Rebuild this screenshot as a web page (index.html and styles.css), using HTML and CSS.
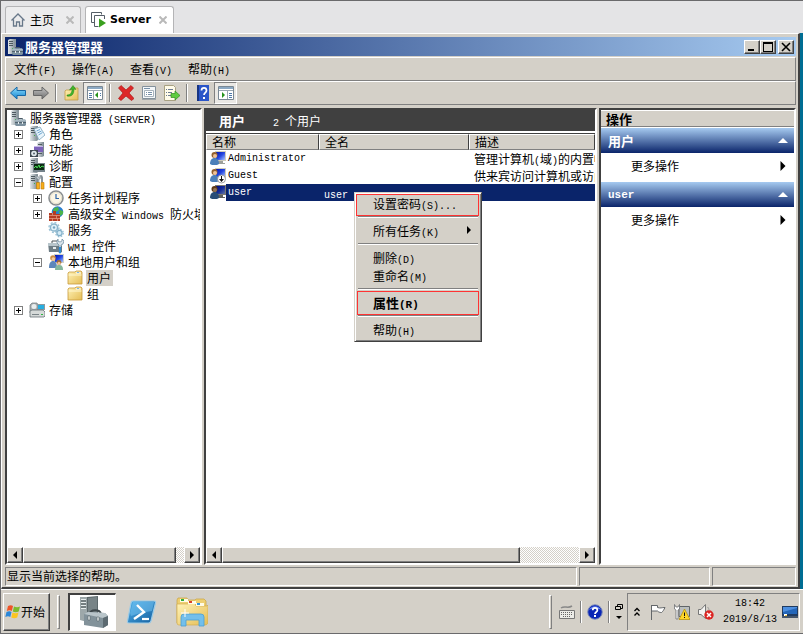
FILE: index.html
```html
<!DOCTYPE html>
<html lang="zh-CN">
<head>
    <meta charset="UTF-8">
    <meta name="viewport" content="width=device-width, initial-scale=1.0">
    <title>服务器管理器</title>
    <link rel="stylesheet" href="styles.css">
</head>
<body>
    <!-- icon sprite -->
    <svg class="sprite" aria-hidden="true">
        <defs>
            <linearGradient id="g-steel" x1="0" x2="1"><stop offset="0" stop-color="#e3e8ea"/><stop offset="1" stop-color="#75838b"/></linearGradient>
            <linearGradient id="g-folder" x1="0" y1="0" x2="1" y2="1"><stop offset="0" stop-color="#fff3b8"/><stop offset="1" stop-color="#e5bd55"/></linearGradient>
            <linearGradient id="g-blue" x1="0" y1="0" x2="0" y2="1"><stop offset="0" stop-color="#8fe0ff"/><stop offset="1" stop-color="#1282cf"/></linearGradient>
            <linearGradient id="g-gray" x1="0" y1="0" x2="0" y2="1"><stop offset="0" stop-color="#c4c4c4"/><stop offset="1" stop-color="#6e6e6e"/></linearGradient>
            <linearGradient id="g-screen" x1="0" y1="0" x2="1" y2="1"><stop offset="0" stop-color="#0014b4"/><stop offset=".5" stop-color="#2446e0"/><stop offset="1" stop-color="#a9c4ff"/></linearGradient>
            <linearGradient id="g-ps" x1="0" y1="0" x2="1" y2="1"><stop offset="0" stop-color="#4fb1ea"/><stop offset="1" stop-color="#155f9f"/></linearGradient>
        </defs>
        <symbol id="tower" viewBox="0 0 16 16">
            <path d="M1 1l2-1h6v14l-2 1H1z" fill="url(#g-steel)"/>
            <path d="M7 1l2-1v14l-2 1z" fill="#8a979e"/>
            <path d="M2 2.500h4M2 4.500h4M2 6.500h4" stroke="#4e5a60"/>
            <path d="M5 9h1v1H5z" fill="#39b54a"/>
        </symbol>
        <symbol id="server" viewBox="0 0 16 16">
            <use href="#tower"/>
            <path d="M8.500 10V8.500h4V10" fill="none" stroke="#4a5a66"/>
            <path d="M5 10.500l1-1h9l1 1V15l-1 1H6l-1-1z" fill="#7c919f"/>
            <path d="M5 10.500l1-1h9l1 1v1H5z" fill="#a9bac4"/>
            <path d="M5 12.500h11" stroke="#52646f"/>
            <path d="M8 12h1v2H8zM12 12h1v2h-1z" fill="#e8eef0"/>
        </symbol>
        <symbol id="roles" viewBox="0 0 16 16">
            <use href="#tower"/>
            <path d="M5 3l6-2 5 8-6 5z" fill="#e9f4fb" stroke="#7ba4bd" stroke-width=".8"/>
            <path d="M7.500 5l3.500-1.500M8.500 7l4-2M9.500 9l4-2.500" stroke="#6ca6cf"/>
        </symbol>
        <symbol id="features" viewBox="0 0 16 16">
            <path d="M8 1l2-1h5v14l-2 1H8z" fill="url(#g-steel)"/>
            <path d="M9 2.500h4M9 11.500h4" stroke="#4e5a60"/>
            <path d="M5 5l1-1h8v6H5z" fill="#7b62b8"/>
            <path d="M5 4.500h9" stroke="#c4b6e8"/>
            <path d="M1 8h8v7H1z" fill="#3c4750"/>
            <circle cx="5" cy="11.500" r="2.800" fill="#dfe9ed"/><circle cx="5" cy="11.500" r="1" fill="#56646d"/>
        </symbol>
        <symbol id="diag" viewBox="0 0 16 16">
            <use href="#tower"/>
            <path d="M4 5h12v9H4z" fill="#75838b"/>
            <path d="M5 6h10v6H5z" fill="#0c2a13"/>
            <path d="M5 10l2-2 1 2 2-3 1 3 2-2 2 1" fill="none" stroke="#47dc55"/>
        </symbol>
        <symbol id="config" viewBox="0 0 16 16">
            <use href="#tower"/>
            <path d="M12 1.500l1 2v5" fill="none" stroke="#899399" stroke-width="2"/>
            <path d="M8 1l-1 2 1 2h1v4h1V5h1l1-2-1-2v2H9z" fill="#c4cdd2" stroke="#69757c" stroke-width=".5"/>
            <path d="M7.500 8.500h3V15h-3zM12 8.500h3V15h-3z" fill="#f7ad19" stroke="#b97707" stroke-width=".6"/>
        </symbol>
        <symbol id="clock" viewBox="0 0 16 16">
            <circle cx="8" cy="8" r="7" fill="#f8fbfc" stroke="#8b8f91" stroke-width="1.600"/>
            <circle cx="8" cy="8" r="5.600" fill="#fbf6e6" stroke="#d8cfae" stroke-width=".6"/>
            <path d="M8 4v4.500h3" fill="none" stroke="#2f66a8" stroke-width="1.200"/>
        </symbol>
        <symbol id="firewall" viewBox="0 0 16 16">
            <circle cx="9.500" cy="6" r="5.800" fill="#2a7fd0"/>
            <path d="M6 2l4-1 1 3-3 2-3-1zM12 4l3 1v3l-3 2-1-3z" fill="#4cb44a"/>
            <path d="M1 7h4V5h3v3h4v7H1z" fill="#b33b23"/>
            <path d="M1 9.500h11M1 12.500h11M4.500 7v2M8.500 9.500v3M4.500 12.500V15M9.500 13v2" stroke="#e9a48c" stroke-width=".7"/>
        </symbol>
        <symbol id="gears" viewBox="0 0 16 16">
            <circle cx="6" cy="5.500" r="3.600" fill="#e1f1f9" stroke="#8bb5cc" stroke-width="1.500"/>
            <circle cx="6" cy="5.500" r="5" fill="none" stroke="#9dc3d7" stroke-width="1.400" stroke-dasharray="2 1.900"/>
            <circle cx="6" cy="5.500" r="1.200" fill="#76a5c1"/>
            <circle cx="11.500" cy="11" r="2.600" fill="#d4ebf6" stroke="#82afc8" stroke-width="1.200"/>
            <circle cx="11.500" cy="11" r="3.800" fill="none" stroke="#94bdd3" stroke-width="1.200" stroke-dasharray="1.600 1.400"/>
        </symbol>
        <symbol id="wmi" viewBox="0 0 16 16">
            <path d="M4 5V3h6v2" fill="none" stroke="#4b5357"/>
            <path d="M0 5h14v9H1z" fill="#6e7d85"/>
            <path d="M0 5h14v3H0z" fill="#b8c5cb"/>
            <path d="M5 9h3v2H5z" fill="#e6ecee"/>
            <path d="M10 1v2l2 1 2-1V1l2 2-1 3-2 1v8h-2V7L9 5V3z" fill="#d8e3ea" stroke="#54778f" stroke-width=".6"/>
            <path d="M11 9h2v6h-2z" fill="#2f8bd3"/>
        </symbol>
        <symbol id="groups" viewBox="0 0 16 16">
            <path d="M6 0h10v9H6z" fill="#cfd1ca"/><path d="M7 1h8v7H7z" fill="url(#g-screen)"/>
            <circle cx="5" cy="4" r="2.800" fill="#c98c43"/>
            <circle cx="5.300" cy="5" r="1.800" fill="#f3c9a0"/>
            <path d="M1 14c0-5 1.500-7 4-7s4 2 4 7z" fill="#5d87ba"/>
            <circle cx="11" cy="8.500" r="2.400" fill="#9b6a33"/>
            <circle cx="11" cy="9.300" r="1.600" fill="#f1c299"/>
            <path d="M7 16c0-4 1.500-5 4-5s4 1 4 5z" fill="#84b79d"/>
        </symbol>
        <symbol id="folder" viewBox="0 0 16 16">
            <path d="M1 3l1-1h6l1-1h5l1 1v12H1z" fill="url(#g-folder)" stroke="#c89b3a" stroke-width=".8"/>
            <path d="M9 3h5" stroke="#fff"/><path d="M1.500 5h13" stroke="#fff7cf"/>
            <path d="M10 2.500h2" stroke="#7cb7e3"/>
        </symbol>
        <symbol id="storage" viewBox="0 0 16 16">
            <path d="M1 3l2-2h5l1 2v8H1z" fill="#a5adb0" stroke="#70797d" stroke-width=".7"/>
            <circle cx="5" cy="4.500" r="2.500" fill="#e9eded"/>
            <path d="M8 2h8v6H8z" fill="#8e999e"/><path d="M9 3h6v4H9z" fill="#27aee0"/>
            <path d="M1 9l2-1h11l2 2v4l-1 1H1z" fill="#d6dad9" stroke="#667074" stroke-width=".8"/>
            <path d="M3 12.500h7" stroke="#7a8488"/><path d="M12 12h2v1h-2z" fill="#2fb540"/>
        </symbol>
        <symbol id="user" viewBox="0 0 16 16">
            <path d="M5 0h11v10H5z" fill="#cfccbd"/><path d="M6 1h9v8H6z" fill="url(#g-screen)"/>
            <path d="M8 10h5v2h2v1H8z" fill="#9da09a"/>
            <circle cx="4.500" cy="4" r="3" fill="#93612e"/>
            <circle cx="5" cy="5" r="2" fill="#efc299"/>
            <path d="M0 13c0-4 2-6 4.500-6S9 9 9 13l-2 1H2z" fill="#4b7fb9"/>
        </symbol>
        <symbol id="user-off" viewBox="0 0 16 16">
            <use href="#user"/>
            <circle cx="11.500" cy="11" r="4" fill="#fff" stroke="#888" stroke-width=".8"/>
            <path d="M11 8h1v3h2l-2.500 3L9 11h2z" fill="#111"/>
        </symbol>
        <symbol id="back" viewBox="0 0 16 16"><path d="M.5 8L7 2v3.500h8.500v5H7V14z" fill="url(#g-blue)" stroke="#1767a5"/></symbol>
        <symbol id="forward" viewBox="0 0 16 16"><path d="M15.500 8L9 2v3.500H.5v5H9V14z" fill="url(#g-gray)" stroke="#666"/></symbol>
        <symbol id="folder-up" viewBox="0 0 16 16">
            <path d="M1 6l1-1h5l1-2h6v12H1z" fill="url(#g-folder)" stroke="#c39d46" stroke-width=".8"/>
            <path d="M3 10c4 0 5-3 5-6L5.500 5 9 .5 12 4.500 10 4c0 5-2 8-7 7z" fill="#3fb52b" stroke="#278015" stroke-width=".5"/>
        </symbol>
        <symbol id="pane-left" viewBox="0 0 16 16">
            <path d="M.5 1.500h15v13H.5z" fill="#fff" stroke="#7a8894"/>
            <path d="M1 2h14v2H1z" fill="#8ca9c4"/><path d="M1 5.500h14M6.500 6v8" stroke="#9aa7b2"/>
            <path d="M2 8.500h3M2 10.500h3M2 12.500h3M13 8.500h1M13 10.500h1" stroke="#4d78a8"/>
            <path d="M11 7v6l-3-3z" fill="#25921b"/>
        </symbol>
        <symbol id="pane-right" viewBox="0 0 16 16">
            <path d="M.5 1.500h15v13H.5z" fill="#fff" stroke="#7a8894"/>
            <path d="M1 2h14v2H1z" fill="#8ca9c4"/><path d="M1 5.500h14M9.500 6v8" stroke="#9aa7b2"/>
            <path d="M11 8.500h3M11 10.500h3M11 12.500h3" stroke="#4d78a8"/>
            <path d="M4 7v6l3-3z" fill="#25921b"/>
        </symbol>
        <symbol id="delete" viewBox="0 0 16 16"><path d="M3 .5L8 5l5-4.500 2.500 2.500L11 8l5 5.500-2.500 2L8 11l-5 4.500-2.500-2L5 8 .5 3z" fill="#dd2929" stroke="#ad1717" stroke-width=".7"/></symbol>
        <symbol id="props" viewBox="0 0 16 16">
            <path d="M1.500 1.500h13v12h-13z" fill="#f4f7f9" stroke="#84919b"/>
            <path d="M3.500 5.500h9v6h-9z" fill="#fff" stroke="#a9b4bd"/>
            <path d="M3 3.500h6M5 7.500h1M7 7.500h4M5 9.500h1M7 9.500h4" stroke="#7790a8"/>
            <path d="M1 14.500h14" stroke="#a2a7aa"/>
        </symbol>
        <symbol id="export" viewBox="0 0 16 16">
            <path d="M.5.500h9l2 2v13H.5z" fill="#fffbe9" stroke="#a8a182"/>
            <path d="M2 4.500h1M4 4.500h5M2 7.500h1M4 7.500h4M2 10.500h1M4 10.500h3" stroke="#6d7c93"/>
            <path d="M7 8.500h4V6l5 4.500-5 4.500v-2.500H7z" fill="#5ecb3f" stroke="#2f8d1c" stroke-width=".7"/>
        </symbol>
        <symbol id="help" viewBox="0 0 16 16">
            <path d="M2 0h12v16H2z" fill="#2a55c8"/><path d="M2 0h2v16H2z" fill="#183583"/>
            <path d="M6.500 5.500c0-3.500 5-3.500 5 0 0 2.200-2.500 2-2.500 4.500" fill="none" stroke="#fff" stroke-width="1.700"/>
            <path d="M8 12h2v2H8z" fill="#fff"/>
        </symbol>
        <symbol id="help-round" viewBox="0 0 16 16">
            <circle cx="8" cy="8" r="7.300" fill="#0a25b5" stroke="#8794bb"/>
            <path d="M2 6c2-5 10-5 12 0-3-2-9-2-12 0z" fill="#6684ee"/>
            <path d="M5.700 6.300c0-3.300 4.700-3.300 4.700 0C10.400 8 8 8 8 10" fill="none" stroke="#fff" stroke-width="1.700"/>
            <path d="M7 11h2v2H7z" fill="#fff"/>
        </symbol>
        <symbol id="home" viewBox="0 0 16 16"><path d="M.5 8.500L7 2l6.500 6.500M2.500 7.500V14h3v-4h3v4h3V7.500" fill="none" stroke="#677789" stroke-width="1.300"/></symbol>
        <symbol id="vm" viewBox="0 0 16 16">
            <path d="M3.500 10.500h-3v-10h10v2" fill="none" stroke="#555e67"/>
            <path d="M7.500 14.500h-4v-11h10V7" fill="none" stroke="#555e67"/>
            <path d="M8 6.500l7 4.500-7 4.500z" fill="#3aa01f"/>
        </symbol>
        <symbol id="windows" viewBox="0 0 16 16">
            <path d="M3 2c2-1 3.500-1 5 0L6.800 7c-1.500-1-3-1-5 0z" fill="#ef5427"/>
            <path d="M9 2.500c2 1 4 1 6 0l-1.300 5c-2 1-4 1-5.900 0z" fill="#7dbb2c"/>
            <path d="M1.500 8c2-1 3.500-1 5 0l-1.200 5c-1.500-1-3-1-5 0z" fill="#2b87d9"/>
            <path d="M7.500 8.500c2 1 4 1 6 0l-1.300 5c-2 1-4 1-5.900 0z" fill="#fbc522"/>
        </symbol>
        <symbol id="server-big" viewBox="0 0 32 32">
            <path d="M3 1h7v25l-7-2z" fill="#9da8aa"/>
            <path d="M10 1l11-1v24l-11 2z" fill="#5c686b"/><path d="M11 2l9-1v16l-9 4z" fill="#788487"/>
            <path d="M4 3.500h5M4 6.500h5M4 9.500h5M4 12.500h5" stroke="#e8eeee"/>
            <path d="M4 5h5M4 8h5M4 11h5" stroke="#4c5658"/>
            <path d="M13 18c0-5 10-5 11 0" fill="none" stroke="#3e484c" stroke-width="1.800"/>
            <path d="M7 18l4-2 17 1 3 3v9l-5 3-19-3z" fill="#82929a"/>
            <path d="M7 18l4-2 17 1 3 3-5 2z" fill="#b9c5ca"/><path d="M26 22l5-2v9l-5 3z" fill="#5d6b72"/>
            <path d="M11 20h2v4h-2zM20 21h2v4h-2z" fill="#e4eaec" stroke="#4c595f" stroke-width=".5"/>
        </symbol>
        <symbol id="powershell" viewBox="0 0 32 32">
            <path d="M7 5h21q2 0 1.500 2L25 25q-.5 2-2.500 2H3q-2 0-1.500-2L5 7q.5-2 2-2z" fill="url(#g-ps)" stroke="#9bcbe8" stroke-width="1.200"/>
            <path d="M7 6h21l-2 9Q15 16 5 20L4 17z" fill="#78c6f3" opacity=".5"/>
            <path d="M11 9l7 7-10 7" fill="none" stroke="#fff" stroke-width="2.400"/><path d="M16 23h7" stroke="#fff" stroke-width="2.200"/>
        </symbol>
        <symbol id="explorer" viewBox="0 0 32 32">
            <path d="M1 4l1-2h9l1 2h7l1-1h8l2 2v22H1z" fill="#eecf72" stroke="#c9a340" stroke-width=".7"/>
            <path d="M1 8h11l1-1h6l1 3h11l1-1v18q-1 2-3 2H3q-2 0-2-2z" fill="url(#g-folder)" stroke="#d3ae4e" stroke-width=".7"/>
            <path d="M4 3h8v3H4zM12 5h8v3h-8zM20 7h8v3h-8z" fill="#fffbe6"/>
            <path d="M5 3h3v2H5z" fill="#2fae3c"/><path d="M13 5h3v2h-3z" fill="#d9402a"/><path d="M21 7h3v2h-3z" fill="#2f95d9"/>
            <path d="M5 30v-9q0-3 3-3h17q3 0 3 3v9h-5v-6H10v6z" fill="#73bfeb" stroke="#4a9fd3" stroke-width=".8"/>
            <path d="M9 13v8M5 17h8" stroke="#fff"/>
        </symbol>
        <symbol id="keyboard" viewBox="0 0 16 16">
            <path d="M2 4c4-3 6 1 11-2" fill="none" stroke="#888" stroke-width="1.500"/>
            <path d="M.5 6.500h15v8H.5z" fill="#ecece8" stroke="#777"/>
            <path d="M2 8.500h12M2 10.500h12M4 12.500h8" stroke="#666" stroke-dasharray="1 1"/>
        </symbol>
        <symbol id="flag" viewBox="0 0 16 16"><path d="M1.500 1v15M2 1.500h5.500v2c3 1 4 0 7.500 0-1 2-2 4-3.500 5-2 0-3-.5-4-1.500H2" fill="#fff" stroke="#63676a"/></symbol>
        <symbol id="network" viewBox="0 0 16 16">
            <path d="M5 2.500h10.500v10H5z" fill="#babebe" stroke="#606568"/>
            <path d="M.5.500V5l1.500 1v9h2V6l1.500-1V.5L4 3H2z" fill="#fff" stroke="#5e6265" stroke-width=".7"/>
            <path d="M10.500 5l5.500 10.500H5z" fill="#ffd72a" stroke="#b18c00" stroke-width=".7"/>
            <path d="M10 8.500h1V12h-1zM10 13h1v1h-1z" fill="#111"/>
        </symbol>
        <symbol id="volume" viewBox="0 0 16 16">
            <path d="M.5 5.500H3l4.500-5v14L3 10.500H.5z" fill="#f4f4f2" stroke="#777"/>
            <path d="M9.500 3c1 1 1.500 2 1.500 3" fill="none" stroke="#999"/>
            <circle cx="11" cy="11" r="4.700" fill="#db2522"/>
            <path d="M9 9l4 4M13 9l-4 4" stroke="#fff" stroke-width="1.500"/>
        </symbol>
        <symbol id="desktop" viewBox="0 0 16 16">
            <path d="M0 2h16v10H0z" fill="#203b60"/><path d="M1 3h14v7H1z" fill="#4d8fe0"/><path d="M1 8l14-4v6H1z" fill="#2466b8"/>
            <path d="M2 10h3v2H2z" fill="#fff"/><path d="M0 12h16v2H0z" fill="#46566a"/><path d="M3 11h2v1H3z" fill="#f5c43a"/>
        </symbol>
        <symbol id="tri-left" viewBox="0 0 8 8"><path d="M6 0v8L2 4z"/></symbol>
        <symbol id="tri-right" viewBox="0 0 8 8"><path d="M2 0v8l4-4z"/></symbol>
    </svg>

    <nav class="tabs">
        <div class="tab">
            <svg class="icon"><use href="#home"/></svg>
            <button class="tab-name">主页</button>
            <button class="tab-close" aria-label="关闭主页"><svg viewBox="0 0 8 8"><path d="M.5.500l7 7M7.500.500l-7 7"/></svg></button>
        </div>
        <div class="tab active">
            <svg class="icon"><use href="#vm"/></svg>
            <button class="tab-name">Server</button>
            <button class="tab-close" aria-label="关闭 Server"><svg viewBox="0 0 8 8"><path d="M.5.500l7 7M7.500.500l-7 7"/></svg></button>
        </div>
    </nav>

    <main class="desktop">
        <div class="window">
            <header class="titlebar">
                <svg class="icon"><use href="#server"/></svg>
                <h1>服务器管理器</h1>
                <button class="win-btn" aria-label="最小化"><svg viewBox="0 0 10 10"><path d="M1 7h6v2H1z"/></svg></button>
                <button class="win-btn" aria-label="最大化"><svg viewBox="0 0 10 10"><path d="M0 0h10v10H0zM1 2v7h8V2z" fill-rule="evenodd"/></svg></button>
                <button class="win-btn close" aria-label="关闭"><svg viewBox="0 0 10 10"><path d="M1 1l8 8M9 1L1 9" stroke="#000" stroke-width="1.600"/></svg></button>
            </header>
            <div class="bar menubar">
                <button>文件<span class="en">(F)</span></button>
                <button>操作<span class="en">(A)</span></button>
                <button>查看<span class="en">(V)</span></button>
                <button>帮助<span class="en">(H)</span></button>
            </div>
            <div class="bar toolbar">
                <button aria-label="后退"><svg class="icon"><use href="#back"/></svg></button>
                <button aria-label="前进"><svg class="icon"><use href="#forward"/></svg></button>
                <i class="sep"></i>
                <button aria-label="上一级"><svg class="icon"><use href="#folder-up"/></svg></button>
                <button class="pressed" aria-label="显示/隐藏控制台树"><svg class="icon"><use href="#pane-left"/></svg></button>
                <i class="sep"></i>
                <button aria-label="删除"><svg class="icon"><use href="#delete"/></svg></button>
                <button aria-label="属性"><svg class="icon"><use href="#props"/></svg></button>
                <button aria-label="导出列表"><svg class="icon"><use href="#export"/></svg></button>
                <i class="sep"></i>
                <button aria-label="帮助"><svg class="icon"><use href="#help"/></svg></button>
                <button class="pressed" aria-label="显示/隐藏操作窗格"><svg class="icon"><use href="#pane-right"/></svg></button>
            </div>

            <div class="panes">
                <section class="pane">
                    <ul class="tree">
                        <li>
                            <div class="node"><svg class="icon"><use href="#server"/></svg><span class="label">服务器管理器<span class="en"> (SERVER)</span></span></div>
                            <ul>
                                <li><div class="node"><button class="toggle plus" aria-label="展开"></button><svg class="icon"><use href="#roles"/></svg><span class="label">角色</span></div></li>
                                <li><div class="node"><button class="toggle plus" aria-label="展开"></button><svg class="icon"><use href="#features"/></svg><span class="label">功能</span></div></li>
                                <li><div class="node"><button class="toggle plus" aria-label="展开"></button><svg class="icon"><use href="#diag"/></svg><span class="label">诊断</span></div></li>
                                <li>
                                    <div class="node"><button class="toggle" aria-label="折叠"></button><svg class="icon"><use href="#config"/></svg><span class="label">配置</span></div>
                                    <ul class="sub">
                                        <li><div class="node"><button class="toggle plus" aria-label="展开"></button><svg class="icon"><use href="#clock"/></svg><span class="label">任务计划程序</span></div></li>
                                        <li><div class="node"><button class="toggle plus" aria-label="展开"></button><svg class="icon"><use href="#firewall"/></svg><span class="label">高级安全<span class="en"> Windows </span>防火墙</span></div></li>
                                        <li><div class="node leaf"><svg class="icon"><use href="#gears"/></svg><span class="label">服务</span></div></li>
                                        <li><div class="node leaf"><svg class="icon"><use href="#wmi"/></svg><span class="label"><span class="en">WMI </span>控件</span></div></li>
                                        <li>
                                            <div class="node"><button class="toggle" aria-label="折叠"></button><svg class="icon"><use href="#groups"/></svg><span class="label">本地用户和组</span></div>
                                            <ul class="sub">
                                                <li><div class="node leaf"><svg class="icon"><use href="#folder"/></svg><span class="label current">用户</span></div></li>
                                                <li><div class="node leaf"><svg class="icon"><use href="#folder"/></svg><span class="label">组</span></div></li>
                                            </ul>
                                        </li>
                                    </ul>
                                </li>
                                <li><div class="node"><button class="toggle plus" aria-label="展开"></button><svg class="icon"><use href="#storage"/></svg><span class="label">存储</span></div></li>
                            </ul>
                        </li>
                    </ul>
                    <div class="scrollbar">
                        <button aria-label="向左"><svg><use href="#tri-left"/></svg></button>
                        <i class="thumb"></i>
                        <i class="track"></i>
                        <button aria-label="向右"><svg><use href="#tri-right"/></svg></button>
                    </div>
                </section>

                <section class="pane users">
                    <div class="users-head"><h2>用户</h2><span><span class="en">2 </span>个用户</span></div>
                    <div class="list">
                        <table>
                            <colgroup><col class="col-name"><col class="col-full"><col></colgroup>
                            <thead>
                                <tr><th>名称</th><th>全名</th><th>描述</th></tr>
                            </thead>
                            <tbody>
                                <tr>
                                    <td><div class="name"><svg class="icon"><use href="#user"/></svg><span class="en">Administrator</span></div></td>
                                    <td></td>
                                    <td>管理计算机<span class="en">(</span>域<span class="en">)</span>的内置帐户</td>
                                </tr>
                                <tr>
                                    <td><div class="name"><svg class="icon"><use href="#user-off"/></svg><span class="en">Guest</span></div></td>
                                    <td></td>
                                    <td>供来宾访问计算机或访问域的内置帐户</td>
                                </tr>
                                <tr class="selected">
                                    <td><div class="name"><svg class="icon"><use href="#user"/></svg><span class="en">user</span></div></td>
                                    <td><span class="en">user</span></td>
                                    <td></td>
                                </tr>
                            </tbody>
                        </table>
                        <div class="context-menu">
                            <button class="marked wide">设置密码<span class="en">(S)...</span></button>
                            <hr>
                            <button class="more">所有任务<span class="en">(K)</span><svg><use href="#tri-right"/></svg></button>
                            <hr>
                            <button>删除<span class="en">(D)</span></button>
                            <button>重命名<span class="en">(M)</span></button>
                            <hr>
                            <button class="marked default">属性<span class="en">(R)</span></button>
                            <hr>
                            <button>帮助<span class="en">(H)</span></button>
                        </div>
                    </div>
                    <div class="scrollbar">
                        <button aria-label="向左"><svg><use href="#tri-left"/></svg></button>
                        <i class="thumb"></i>
                        <i class="track"></i>
                        <button aria-label="向右"><svg><use href="#tri-right"/></svg></button>
                    </div>
                </section>

                <aside class="pane">
                    <h2 class="actions-head">操作</h2>
                    <button class="group">用户<svg viewBox="0 0 10 5"><path d="M5 0l5 5H0z"/></svg></button>
                    <button class="action">更多操作<svg><use href="#tri-right"/></svg></button>
                    <button class="group"><span class="en">user</span><svg viewBox="0 0 10 5"><path d="M5 0l5 5H0z"/></svg></button>
                    <button class="action">更多操作<svg><use href="#tri-right"/></svg></button>
                </aside>
            </div>

            <footer class="statusbar"><span>显示当前选择的帮助。</span><span></span><span></span></footer>
        </div>
    </main>

    <div class="taskbar">
        <button class="start"><svg class="icon"><use href="#windows"/></svg>开始</button>
        <i class="grip"></i>
        <button class="task running" aria-label="服务器管理器"><svg><use href="#server-big"/></svg></button>
        <button class="task" aria-label="PowerShell"><svg><use href="#powershell"/></svg></button>
        <button class="task" aria-label="资源管理器"><svg><use href="#explorer"/></svg></button>
        <div class="lang">
            <i class="grip"></i>
            <button aria-label="键盘"><svg class="icon"><use href="#keyboard"/></svg></button>
            <i class="line"></i>
            <button aria-label="帮助"><svg class="icon"><use href="#help-round"/></svg></button>
            <i class="line"></i>
            <button class="lang-opts" aria-label="选项"><svg viewBox="0 0 8 18"><path d="M2.500 3.500v-2h5v4h-2M.5 3.500h5v3h-5z" fill="none" stroke="#000"/><path d="M1 13h6l-3 3z"/></svg></button>
        </div>
        <div class="tray">
            <button class="chevrons" aria-label="显示隐藏的图标"><svg viewBox="0 0 6 10"><path d="M.5 4L3 1.500 5.500 4M.5 8.500L3 6l2.500 2.500" fill="none" stroke="#000" stroke-width="1.300"/></svg></button>
            <svg class="icon"><use href="#flag"/></svg>
            <svg class="icon"><use href="#network"/></svg>
            <svg class="icon"><use href="#volume"/></svg>
            <div class="clock">
                <time class="en">18:42<br>2019/8/13</time>
                <svg class="icon"><use href="#desktop"/></svg>
            </div>
        </div>
    </div>
</body>
</html>
```
FILE: styles.css
```css
:root {
    --face: #d4d0c8;
    --shade: #808080;
    --dark: #404040;
    --navy: #0a246a;
    --sky: #a6caf0;
    --cjk: "Noto Sans CJK SC", sans-serif;
}

* {
    box-sizing: border-box;
}

body {
    margin: 0;
    min-height: 100vh;
    display: flex;
    flex-direction: column;
    border: 1px solid #6a6a6c;
    border-right: 0;
    background: var(--face);
    font: 12px/16px var(--cjk);
    color: #000;
}

h1, h2, ul {
    margin: 0;
    padding: 0;
    list-style: none;
}

button {
    margin: 0;
    padding: 0;
    border: 0;
    background: none;
    font: inherit;
    color: inherit;
    text-align: left;
}

svg {
    display: block;
    flex: none;
}

.sprite {
    position: absolute;
    width: 0;
    height: 0;
}

.icon {
    width: 16px;
    height: 16px;
}

/* half-width latin next to 12px hanzi */
.en {
    font-family: "Liberation Mono", monospace;
    font-size: 10px;
    line-height: 10px;
    white-space: pre;
}

/* Tabs */
.tabs {
    display: flex;
    gap: 4px;
    height: 32px;
    padding: 5px 4px 0;
    background: #e4e4e6;
}

.tab {
    display: flex;
    align-items: center;
    gap: 3px;
    height: 27px;
    padding: 0 6px 0 5px;
    border: 1px solid #b4b4b6;
    border-bottom: 0;
    border-radius: 3px 3px 0 0;
    background: #ececed;
}

.tab.active {
    background: #fff;
    font: bold 11px/16px "DejaVu Sans", sans-serif;
}

.tab-close {
    margin-left: 9px;
}

.tab.active .tab-close {
    margin-left: 5px;
}

.tab-close svg {
    width: 8px;
    height: 8px;
    stroke: #b9b9b9;
    stroke-width: 2;
}

/* Window */
.desktop {
    flex: 1;
    display: flex;
    padding-right: 3px;
    background: #006d93;
}

.window {
    flex: 1;
    min-width: 0;
    display: flex;
    flex-direction: column;
    padding: 3px 2px 1px 3px;
    border: 1px solid #fff;
    border-width: 1px 2px 2px 1px;
    border-color: #fff var(--dark) var(--dark) #fff;
    background: var(--face);
}

.titlebar {
    display: flex;
    align-items: center;
    height: 19px;
    padding: 0 2px;
    background: linear-gradient(to right, var(--navy), var(--sky));
    color: #fff;
}

.titlebar h1 {
    flex: 1;
    margin-left: 2px;
    font-size: 13px;
    line-height: 18px;
}

.win-btn {
    display: grid;
    place-items: center;
    width: 16px;
    height: 14px;
    border: 1px solid;
    border-color: #fff var(--dark) var(--dark) #fff;
    box-shadow: inset -1px -1px var(--shade);
    background: var(--face);
}

.win-btn svg {
    width: 10px;
    height: 10px;
}

.win-btn.close {
    margin-left: 2px;
}

.bar {
    display: flex;
    height: 24px;
    border: 1px solid;
    border-color: #fff var(--shade) var(--shade) #fff;
}

.menubar {
    gap: 16px;
    margin-top: 1px;
    padding-left: 8px;
}

.toolbar {
    align-items: center;
}

.toolbar button {
    display: grid;
    place-items: center;
    width: 23px;
    height: 22px;
    border: 1px solid transparent;
}

.toolbar .pressed {
    border-color: var(--shade) #fff #fff var(--shade);
    background: #eae8e4;
}

.sep {
    width: 8px;
    height: 18px;
    background: linear-gradient(to right, transparent 3px, var(--shade) 3px 4px, #fff 4px 5px, transparent 5px);
}

/* Panes */
.panes {
    flex: 1;
    display: grid;
    grid-template-columns: 197px minmax(0, 1fr) 197px;
    gap: 2px;
    padding-top: 3px;
}

.pane {
    min-width: 0;
    display: flex;
    flex-direction: column;
    border: 2px solid;
    border-color: var(--dark) #fff #fff var(--dark);
    background: #fff;
}

.tree {
    flex: 1;
    overflow: hidden;
    padding-left: 3px;
}

.tree .sub {
    padding-left: 19px;
}

.node {
    display: flex;
    align-items: center;
    height: 16px;
    white-space: nowrap;
}

.leaf {
    padding-left: 19px;
}

.label {
    margin-left: 3px;
    padding: 0 1px;
}

.current {
    padding-right: 2px;
    background: var(--face);
}

.toggle {
    flex: none;
    width: 9px;
    height: 9px;
    margin: 0 6px 0 4px;
    border: 1px solid var(--shade);
    background: linear-gradient(#000, #000) center / 5px 1px no-repeat;
}

.toggle.plus {
    background: linear-gradient(#000, #000) center / 5px 1px no-repeat, linear-gradient(#000, #000) center / 1px 5px no-repeat;
}

.scrollbar {
    display: flex;
    height: 16px;
}

.scrollbar button,
.thumb {
    border: 1px solid;
    border-color: #fff var(--dark) var(--dark) #fff;
    box-shadow: inset -1px -1px var(--shade);
    background: var(--face);
}

.scrollbar button {
    display: grid;
    place-items: center;
    width: 16px;
}

.scrollbar svg {
    width: 8px;
    height: 8px;
}

.thumb {
    flex: 19;
}

.track {
    flex: 1;
    background: repeating-conic-gradient(var(--face) 0 25%, #fff 0 50%) 0 0 / 2px 2px;
}

.users .thumb {
    flex: 5;
}

/* User list */
.users-head {
    display: flex;
    align-items: center;
    gap: 28px;
    height: 21px;
    padding-left: 13px;
    background: var(--dark);
    color: #fff;
}

.users-head h2 {
    font-size: 13px;
    line-height: 16px;
}

.list {
    position: relative;
    flex: 1;
    margin-top: 2px;
    border-top: 1px solid var(--dark);
}

table {
    width: 100%;
    table-layout: fixed;
    border-collapse: separate;
    border-spacing: 0;
}

.col-name {
    width: 113px;
}

.col-full {
    width: 150px;
}

th {
    height: 16px;
    padding: 0 5px;
    border: 1px solid;
    border-color: #fff var(--dark) var(--shade) #fff;
    background: var(--face);
    font-weight: normal;
    line-height: 14px;
    text-align: left;
}

td {
    height: 17px;
    padding: 0 0 0 5px;
    overflow: hidden;
    line-height: 16px;
    white-space: nowrap;
}

td:first-child {
    padding-left: 4px;
}

.name {
    display: flex;
    align-items: center;
}

.name .en {
    flex: 1;
    padding-left: 2px;
    line-height: 17px;
}

.selected td {
    background: var(--navy);
    color: #fff;
}

.selected td:first-child {
    background: none;
}

.selected .name .en {
    background: var(--navy);
}

.selected .icon {
    filter: brightness(.6) saturate(1.2);
}

.context-menu {
    position: absolute;
    top: 58px;
    left: 148px;
    width: 128px;
    padding: 2px;
    border: 1px solid;
    border-color: var(--face) var(--dark) var(--dark) var(--face);
    box-shadow: inset 1px 1px #fff, inset -1px -1px var(--shade);
    background: var(--face);
}

.context-menu button {
    position: relative;
    display: block;
    width: 100%;
    height: 18px;
    padding-left: 16px;
    line-height: 18px;
}

.context-menu hr {
    height: 2px;
    margin: 3px 1px 4px;
    border: 0;
    border-top: 1px solid var(--shade);
    background: #fff;
}

.more svg {
    float: right;
    width: 8px;
    height: 8px;
    margin: 4px 6px 0 0;
}

.context-menu .default {
    font-weight: bold;
    font-size: 13px;
}

.default .en,
.group .en {
    font-size: 11px;
}

.marked::after {
    content: "";
    position: absolute;
    inset: -3px 0;
    border: 1px solid #f33;
}

.marked.wide::after {
    inset: -1px 0 -3px -1px;
}

/* Actions */
.actions-head {
    height: 18px;
    padding-left: 5px;
    border: 1px solid #fff;
    border-width: 1px 0;
    background: var(--face);
    box-shadow: inset 0 -1px var(--shade);
    font-size: 13px;
    line-height: 15px;
}

.group,
.action {
    display: flex;
    align-items: center;
    justify-content: space-between;
    height: 25px;
    padding: 0 6px 0 7px;
}

.group {
    background: linear-gradient(var(--sky), var(--navy));
    color: #fff;
    font-size: 13px;
    font-weight: bold;
}

.group svg {
    width: 10px;
    height: 5px;
    fill: #fff;
}

.action {
    margin-bottom: 4px;
    padding-left: 30px;
}

.action svg {
    width: 10px;
    height: 10px;
}

.statusbar {
    display: grid;
    grid-template-columns: 1fr 131px 84px;
    gap: 2px;
    height: 19px;
    margin-top: 2px;
}

.statusbar span {
    padding-left: 1px;
    border: 1px solid;
    border-color: var(--shade) #fff #fff var(--shade);
}

/* Taskbar */
.taskbar {
    display: flex;
    align-items: center;
    height: 44px;
    padding: 0 3px 0 2px;
    border-top: 1px solid #fff;
}

.start {
    display: flex;
    align-items: center;
    width: 47px;
    height: 38px;
    padding-left: 1px;
    border: 1px solid;
    border-color: #fff var(--dark) var(--dark) #fff;
    box-shadow: inset -1px -1px var(--shade);
}

.grip {
    width: 3px;
    height: 34px;
    margin: 0 8px 0 7px;
    border: 1px solid;
    border-color: #fff var(--shade) var(--shade) #fff;
}

.task {
    display: grid;
    place-items: center;
    width: 48px;
    height: 38px;
    margin-right: 2px;
}

.task svg {
    width: 32px;
    height: 32px;
}

.running {
    border: 2px solid;
    border-width: 2px 1px 1px 2px;
    border-color: var(--dark) #fff #fff var(--dark);
    background: #fff;
}

.lang {
    display: flex;
    align-items: center;
    gap: 5px;
    margin-left: auto;
}

.lang .grip {
    margin: 0 2px 0 0;
}

.line {
    width: 2px;
    height: 22px;
    border-left: 1px solid var(--shade);
    background: #fff;
}

.lang-opts svg {
    width: 8px;
    height: 18px;
}

.tray {
    display: flex;
    align-items: center;
    gap: 8px;
    height: 38px;
    margin-left: 4px;
    padding: 0 1px 0 6px;
    border: 1px solid;
    border-color: var(--shade) #fff #fff var(--shade);
}

.chevrons svg {
    width: 6px;
    height: 10px;
    margin-right: 2px;
}

.clock {
    display: flex;
    align-items: center;
    gap: 4px;
}

.clock time {
    width: 56px;
    line-height: 16px;
    text-align: center;
}
```
